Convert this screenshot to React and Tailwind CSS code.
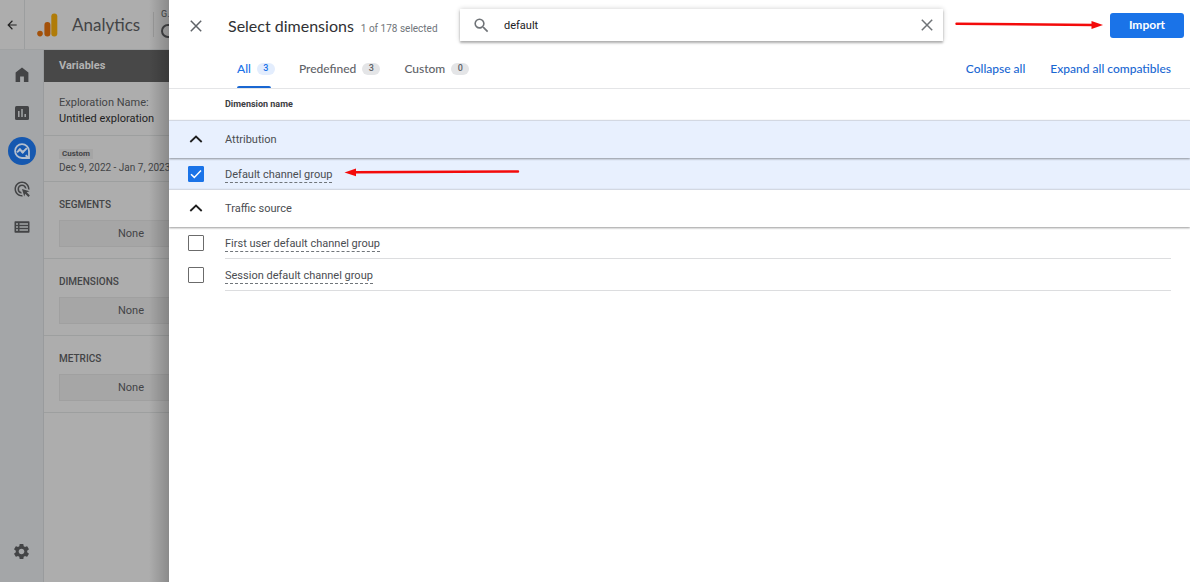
import React, { useState } from "react";
import { MdAdsClick, MdArrowBack, MdSearch, MdSettings } from "react-icons/md";

const heading = "font-['Lato','Roboto',sans-serif]";

function HomeIcon() {
  return (
    <svg width="14" height="16" viewBox="0 0 14 16" fill="currentColor" aria-hidden="true">
      <path d="M7 0.6 13.4 5.5V15H8.9V9.6H5.1V15H0.6V5.5Z" />
    </svg>
  );
}

function ReportsIcon() {
  return (
    <svg width="16" height="16" viewBox="0 0 16 16" aria-hidden="true">
      <rect x="1" y="1" width="14" height="14" rx="1.5" fill="currentColor" />
      <path d="M4.8 6v6M8 4v8M11.2 9v3" stroke="#a4a6a8" strokeWidth="1.5" />
    </svg>
  );
}

function ExploreIcon() {
  return (
    <svg width="28" height="28" viewBox="0 0 28 28" fill="none" aria-hidden="true">
      <circle cx="14" cy="14" r="14" fill="#1558b0" />
      <path d="M14 7.2a6.9 6.9 0 1 0 0 13.8h7v-7a7 7 0 0 0-7-6.8Z" stroke="#b4bfce" strokeWidth="1.8" />
      <path d="M17.6 18.2 21 21" stroke="#b4bfce" strokeWidth="1.8" />
      <path d="m9 15.4 2.9-2.9 2.8 2.8 4.2-4.2" stroke="#b4bfce" strokeWidth="2" />
      <circle cx="11.9" cy="12.9" r="1.4" fill="#b4bfce" />
      <circle cx="14.7" cy="15" r="1.4" fill="#b4bfce" />
    </svg>
  );
}

function LibraryIcon() {
  return (
    <svg width="16" height="12" viewBox="0 0 16 12" aria-hidden="true">
      <rect x="0.5" y="0.3" width="15" height="11.4" rx="0.8" fill="currentColor" />
      <path d="M2 3h2M5.5 3H14M2 6h2M5.5 6H14M2 9h2M5.5 9H14" stroke="#a4a6a8" strokeWidth="1.3" />
    </svg>
  );
}

function CrossIcon() {
  return (
    <svg width="12" height="12" viewBox="0 0 12 12" stroke="currentColor" strokeWidth="1.5" aria-hidden="true">
      <path d="m0.8 0.8 10.4 10.4M11.2 0.8 0.8 11.2" />
    </svg>
  );
}

function Logo() {
  return (
    <svg width="22" height="24" viewBox="0 0 22 24" aria-hidden="true">
      <rect x="14.3" y="0.5" width="6" height="23" rx="2.9" fill="#b07c09" />
      <rect x="7.4" y="9" width="6" height="14.5" rx="2.9" fill="#a3510a" />
      <circle cx="3" cy="20.6" r="2.8" fill="#a3510a" />
    </svg>
  );
}

const RAIL = [
  { label: "Home", icon: <HomeIcon /> },
  { label: "Reports", icon: <ReportsIcon /> },
  { label: "Explore", icon: <ExploreIcon /> },
  { label: "Advertising", icon: <MdAdsClick size={18} /> },
  { label: "Library", icon: <LibraryIcon /> },
];

function Backdrop() {
  return (
    <div className="relative flex w-[169px] shrink-0 flex-col overflow-hidden bg-[#adadad] text-[#434446]">
      <header className="flex h-[50px] shrink-0 items-stretch border-b border-[#a0a2a3]">
        <button aria-label="Back" className="flex w-[25px] shrink-0 items-center justify-center border-r border-[#9c9e9f] text-[#222]">
          <MdArrowBack size={14} />
        </button>
        <div className="flex shrink-0 items-center gap-[13px] pl-3">
          <Logo />
          <span className={`${heading} w-[70px] text-[17px]`}>Analytics</span>
        </div>
        <div className="my-3 ml-[11px] w-px shrink-0 bg-[#9a9a9a]" />
        <div className="flex shrink-0 flex-col pl-[7px] pt-2 text-[9px] leading-[12px]">
          <span>G.</span>
          <span className="mt-1 size-[14px] rounded-full border-2 border-[#434446]" />
        </div>
      </header>
      <div className="flex flex-1">
        <nav className="flex w-[44px] shrink-0 flex-col items-center border-r border-[#999b9d] bg-[#a4a6a8] pb-[21px] pt-[6px]">
          {RAIL.map((item) => (
            <button key={item.label} aria-label={item.label} className="flex h-[38px] items-center justify-center">
              {item.icon}
            </button>
          ))}
          <button aria-label="Admin" className="mt-auto">
            <MdSettings size={19} />
          </button>
        </nav>
        <section className="w-[174px] shrink-0 text-[11px]">
          <h2 className="flex h-8 items-center bg-[#484848] px-[15px] text-[11px] font-bold text-[#b2b2b2]">Variables</h2>
          <div className="h-[54px] border-b border-[#9d9f9f] px-[15px] pt-[13px] text-[11px] leading-[16px]">
            <div>Exploration Name:</div>
            <div className="text-[#1f1f1f]">Untitled exploration</div>
          </div>
          <div className="h-[46px] border-b border-[#9d9f9f] px-[15px] pt-[13px]">
            <span className="block w-fit bg-[#a5a5a5] px-[3px] text-[8px] font-bold leading-[10px]">Custom</span>
            <span className="block whitespace-nowrap text-[10px] leading-[18px]">Dec 9, 2022 - Jan 7, 2023</span>
          </div>
          {["SEGMENTS", "DIMENSIONS", "METRICS"].map((name) => (
            <div key={name} className="h-[77px] border-b border-[#9d9f9f] px-[15px] pt-[15px]">
              <h3 className="text-[10px] font-medium leading-[16px]">{name}</h3>
              <button className="mt-[7px] h-[27px] w-full border border-[#a0a0a0] bg-[#a6a6a6] pt-px text-[11px]">None</button>
            </div>
          ))}
        </section>
      </div>
      <div className="absolute inset-y-0 right-0 w-5 bg-linear-to-r from-transparent to-black/20" />
    </div>
  );
}

function CheckBox({ id, defaultChecked }) {
  return (
    <span className="grid place-items-center">
      <input
        id={id}
        type="checkbox"
        defaultChecked={defaultChecked}
        className="peer col-start-1 row-start-1 size-4 appearance-none rounded-[1px] border border-[#6b6b6b] bg-white checked:border-[#1a73e8] checked:bg-[#1a73e8]"
      />
      <svg
        className="pointer-events-none col-start-1 row-start-1 hidden peer-checked:block"
        width="14"
        height="14"
        viewBox="0 0 14 14"
        fill="none"
        aria-hidden="true"
      >
        <path d="m2 7.2 3.3 3.2L12 3.5" stroke="#fff" strokeWidth="1.5" />
      </svg>
    </span>
  );
}

function GroupRow({ name, tinted }) {
  return (
    <button
      aria-expanded="true"
      className={`relative flex h-[38px] w-full items-center border-t border-[#d3d8e2] text-left shadow-[0_1px_2px_rgba(0,0,0,0.4)] ${
        tinted ? "bg-[#e8f0fe]" : "bg-white"
      }`}
    >
      <span className="flex w-[56px] justify-center pb-[2px] pr-[2px]">
        <svg width="14" height="8" viewBox="0 0 14 8" fill="none" aria-hidden="true">
          <path d="m1.3 7 5.7-5.5L12.7 7" stroke="#1f1f1f" strokeWidth="1.8" />
        </svg>
      </span>
      <span className="pt-[2px]">{name}</span>
    </button>
  );
}

function DimensionRow({ id, name, checked, children }) {
  return (
    <div className={`flex items-stretch ${checked ? "h-[31px] bg-[#e8f0fe]" : "h-8 pr-[19px]"}`}>
      <div className="flex w-[56px] shrink-0 items-center justify-center pr-[2px]">
        <CheckBox id={id} defaultChecked={checked} />
      </div>
      <div className={`flex flex-1 items-center ${checked ? "" : "border-b border-[#dcdddf]"}`}>
        <label htmlFor={id} className="border-b border-dashed border-[#70757a] pt-[3px] leading-[14px]">
          {name}
        </label>
        {children}
      </div>
    </div>
  );
}

const TABS = [
  { name: "All", count: 3 },
  { name: "Predefined", count: 3 },
  { name: "Custom", count: 0 },
];

export default function App() {
  const [query, setQuery] = useState("default");
  return (
    <div className="flex min-h-screen bg-white pr-[10px] font-['Roboto',sans-serif]">
      <Backdrop />
      <main role="dialog" aria-label="Select dimensions" className="min-w-0 flex-1 overflow-hidden text-[11px] text-[#4a4d51]">
        <header className="flex h-[50px] items-center pr-[6px]">
          <button aria-label="Close" className="flex w-[56px] shrink-0 justify-center pr-[2px] pt-[2px] text-[#5f6368]">
            <CrossIcon />
          </button>
          <div className="flex w-[231px] shrink-0 items-baseline gap-[7px] whitespace-nowrap pl-[3px] pt-[2px]">
            <h1 className={`${heading} text-[16px] text-[#303134]`}>Select dimensions</h1>
            <span className="text-[10px] text-[#70757a]">1 of 178 selected</span>
          </div>
          <div className="ml-1 flex h-8 min-w-0 flex-1 items-center bg-white pl-3 pr-[10px] text-[#6f7377] shadow-[0_2px_2px_rgba(0,0,0,0.25),0_0_5px_rgba(0,0,0,0.2)]">
            <MdSearch size={19} className="shrink-0" />
            <input
              aria-label="Search dimensions"
              value={query}
              onChange={(e) => setQuery(e.target.value)}
              className="ml-[13px] min-w-0 flex-1 pt-[2px] text-[11px] text-[#202124] outline-none"
            />
            <button aria-label="Clear search" onClick={() => setQuery("")}>
              <CrossIcon />
            </button>
          </div>
          <svg className="ml-3 mr-[7px] shrink-0" width="148" height="10" viewBox="0 0 148 10" aria-hidden="true">
            <path d="M1.5 3.7 138 5" stroke="#f30b0b" strokeWidth="2.4" strokeLinecap="round" />
            <path d="M136.5 1 148 5.1 136.5 9Z" fill="#f30b0b" />
          </svg>
          <button className={`${heading} h-[25px] w-[74px] shrink-0 rounded-[3px] bg-[#1a73e8] text-[12px] font-bold text-white`}>
            Import
          </button>
        </header>
        <div className={`${heading} flex h-[39px] items-stretch border-b border-[#e4e5e7] pl-[68px] pr-[19px] text-[12px] font-medium`}>
          <div role="tablist" className="flex gap-6">
            {TABS.map((tab, i) => (
              <button
                key={tab.name}
                role="tab"
                aria-selected={i === 0}
                className={`flex flex-col justify-between ${i === 0 ? "text-[#1a73e8]" : "text-[#5f6368]"}`}
              >
                <span className="flex h-[38px] items-center gap-[6px]">
                  {tab.name}
                  <span
                    className={`flex h-3 w-[18px] items-center justify-center rounded-full font-['Roboto',sans-serif] text-[9px] ${
                      i === 0 ? "bg-[#e3edfd]" : "bg-[#e4e5e7]"
                    }`}
                  >
                    {tab.count}
                  </span>
                </span>
                {i === 0 && <span className="-mt-[2px] h-[2px] w-[34px] rounded-t bg-[#1967d2]" />}
              </button>
            ))}
          </div>
          <div className="ml-auto flex gap-[25px] text-[#1967d2]">
            <button>Collapse all</button>
            <button>Expand all compatibles</button>
          </div>
        </div>
        <div className="flex h-[31px] items-center pl-[56px] text-[9px] font-bold text-[#3c4043]">Dimension name</div>
        <GroupRow name="Attribution" tinted />
        <DimensionRow id="default-channel" name="Default channel group" checked>
          <svg className="-mt-1 ml-3" width="176" height="10" viewBox="0 0 176 10" aria-hidden="true">
            <path d="M11 5.3 174 4.5" stroke="#f30b0b" strokeWidth="2.4" strokeLinecap="round" />
            <path d="M12 1.5 0.5 5.4 12 9.2Z" fill="#f30b0b" />
          </svg>
        </DimensionRow>
        <GroupRow name="Traffic source" />
        <DimensionRow id="first-user" name="First user default channel group" />
        <DimensionRow id="session" name="Session default channel group" />
      </main>
    </div>
  );
}
